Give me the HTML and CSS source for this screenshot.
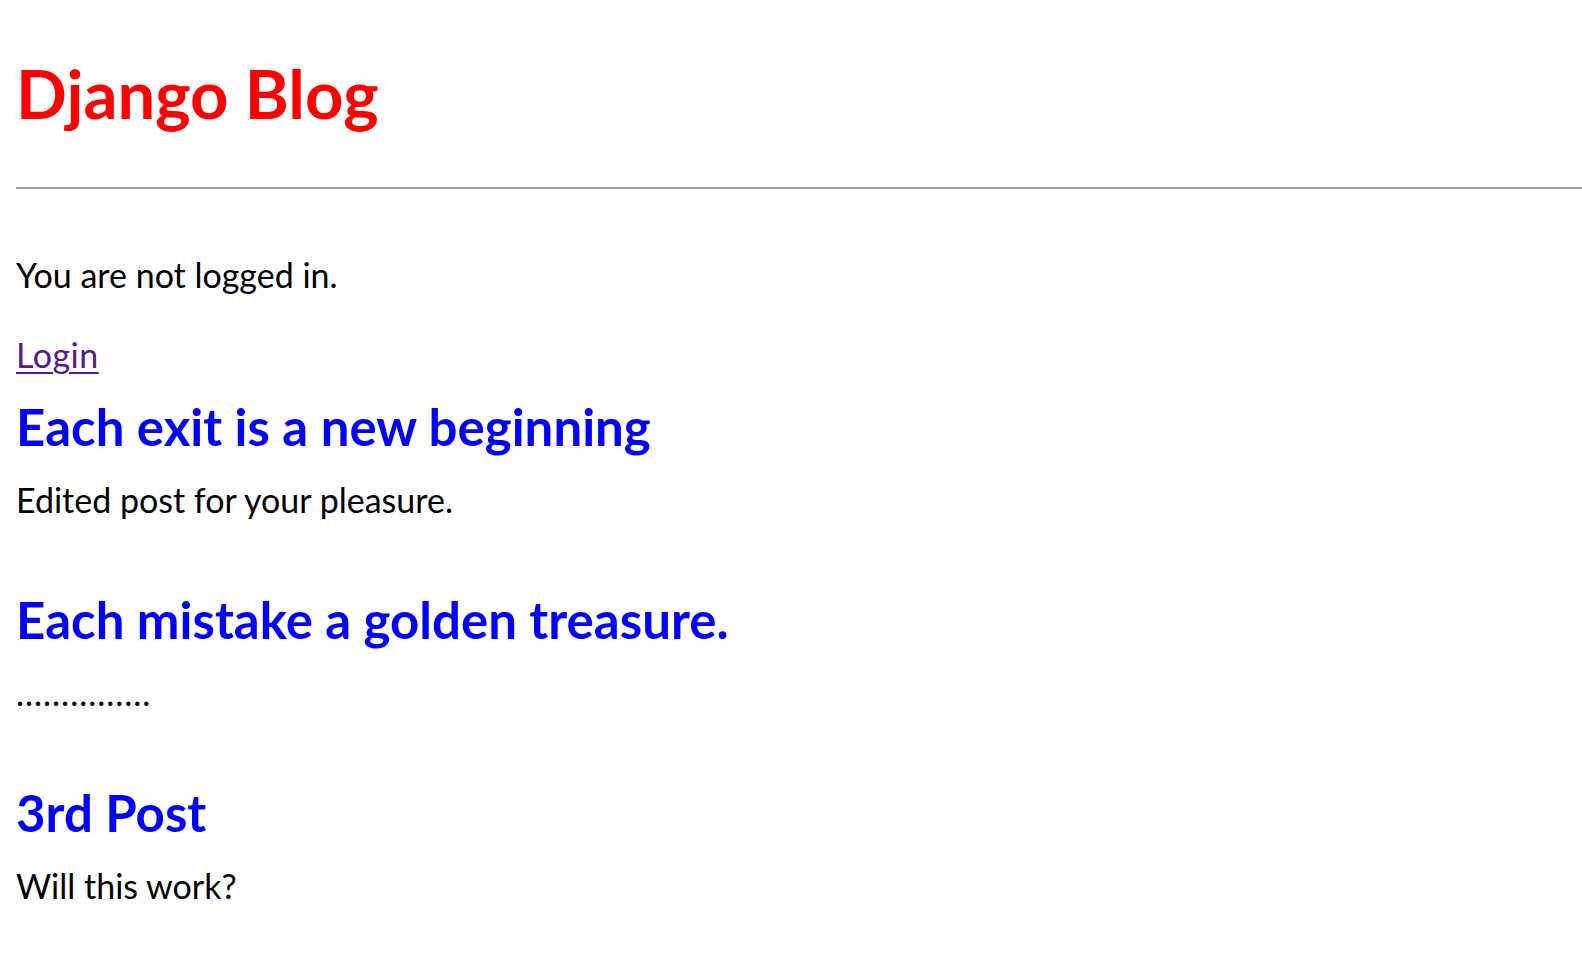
FILE: index.html
```html
<!DOCTYPE html>
<html lang="en">
<head>
<meta charset="utf-8">
<title>Django Blog</title>
<link rel="stylesheet" href="styles.css">
</head>
<body>
<div class="page">
  <h1 class="site-title">Django Blog</h1>
  <hr class="rule">
  <p class="status">You are not logged in.</p>
  <div class="auth"><a class="login" href="#">Login</a></div>
  <div class="posts">
    <article class="post">
      <h2 class="post-title">Each exit is a new beginning</h2>
      <p class="post-body">Edited post for your pleasure.</p>
    </article>
    <article class="post">
      <h2 class="post-title">Each mistake a golden treasure.</h2>
      <p class="post-body dots">...............</p>
    </article>
    <article class="post">
      <h2 class="post-title">3rd Post</h2>
      <p class="post-body">Will this work?</p>
    </article>
  </div>
</div>
</body>
</html>
```

FILE: styles.css
```css
html, body {
  margin: 0;
  padding: 0;
  background: #ffffff;
}

body {
  font-family: "Lato", "Open Sans", "Noto Sans", sans-serif;
  color: #000000;
  overflow: hidden;
}

.page {
  padding-left: 16px;
}

.site-title {
  margin: 50px 0 0 0;
  font-size: 67px;
  line-height: 87px;
  font-weight: 700;
  color: #ff0000;
}

.rule {
  margin: 50px 0 0 0;
  border: 0;
  height: 2px;
  background: #999999;
}

.status {
  margin: 65px 0 0 0;
  font-size: 34px;
  line-height: 42px;
}

.auth {
  margin-top: 38px;
  font-size: 34px;
  line-height: 42px;
}

.login {
  color: #551a8b;
  text-decoration: underline;
  text-decoration-thickness: 2px;
  text-underline-offset: 4px;
  letter-spacing: 0.5px;
}

.posts {
  display: flex;
  flex-direction: column;
  gap: 68px;
  margin-top: 20px;
}

.post {
  display: flex;
  flex-direction: column;
  gap: 21px;
}

.post-title {
  margin: 0;
  font-size: 51px;
  line-height: 62px;
  font-weight: 700;
  color: #0000ff;
}

.post-body {
  margin: 0;
  font-size: 34px;
  line-height: 42px;
}

.dots {
  letter-spacing: 1px;
}
```
